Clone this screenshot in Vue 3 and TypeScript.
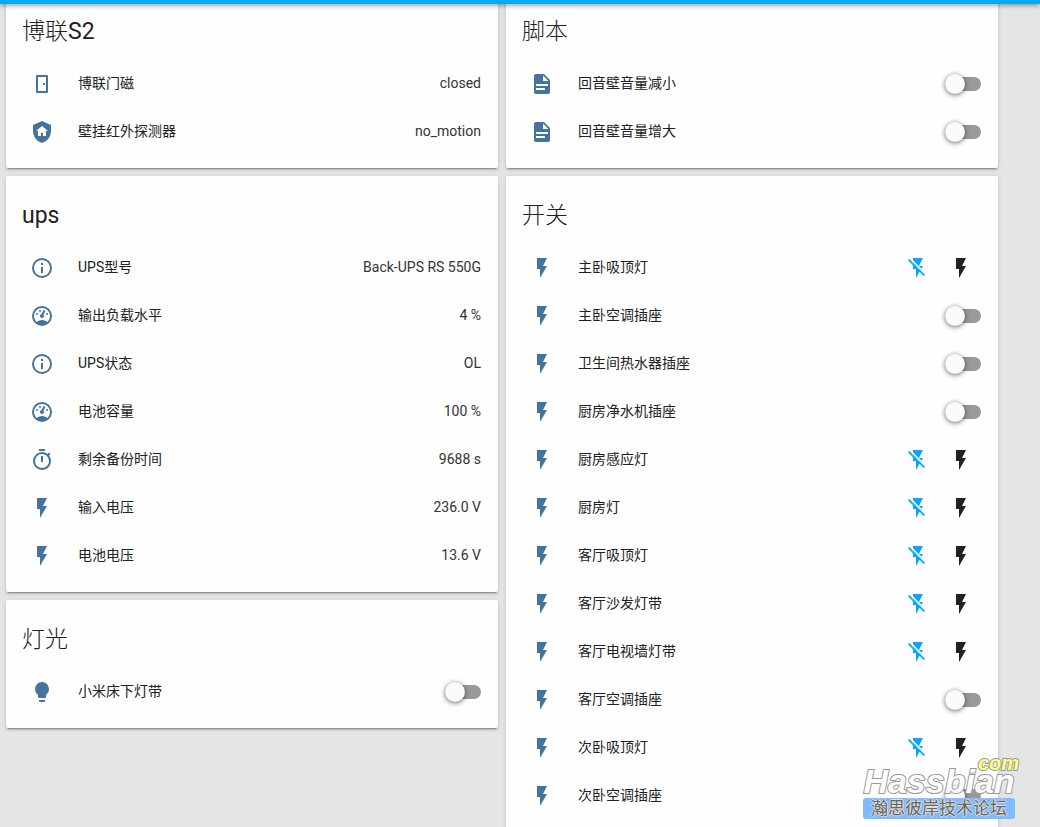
<script setup lang="ts">
import { reactive } from 'vue'

type IconName = 'door' | 'shield' | 'file' | 'info' | 'gauge' | 'timer' | 'flash' | 'bulb'

interface Entity {
  id: string
  icon: IconName
  name: string
  kind: 'sensor' | 'toggle' | 'pair'
  state?: string
  on?: boolean
}

interface Card {
  title: string
  entities: Entity[]
}

const flash = 'M7,2V13H10V22L17,10H13L17,2H7Z'
const flashOff =
  'M17,10H13L17,2H7V4.18L15.46,12.64M3.27,3L2,4.27L7,9.27V13H10V22L13.58,15.86L17.73,20L19,18.73L3.27,3Z'

const icons: Record<IconName, string> = {
  door: 'M7,3H17A1,1 0 0,1 18,4V20A1,1 0 0,1 17,21H7A1,1 0 0,1 6,20V4A1,1 0 0,1 7,3M8,5V19H16V5H8M13,11H15V13H13V11Z',
  shield:
    'M11,13H13V16H16V11H18L12,6L6,11H8V16H11V13M12,1L21,5V11C21,16.55 17.16,21.74 12,23C6.84,21.74 3,16.55 3,11V5L12,1Z',
  file: 'M13,9H18.5L13,3.5V9M6,2H14L20,8V20A2,2 0 0,1 18,22H6C4.89,22 4,21.1 4,20V4C4,2.89 4.89,2 6,2M15,18V16H6V18H15M18,14V12H6V14H18Z',
  info: 'M11,9H13V7H11M12,20C7.59,20 4,16.41 4,12C4,7.59 7.59,4 12,4C16.41,4 20,7.59 20,12C20,16.41 16.41,20 12,20M12,2A10,10 0 0,0 2,12A10,10 0 0,0 12,22A10,10 0 0,0 22,12A10,10 0 0,0 12,2M11,17H13V11H11V17Z',
  gauge:
    'M17.3,18C19,16.5 20,14.4 20,12A8,8 0 0,0 12,4A8,8 0 0,0 4,12C4,14.4 5,16.5 6.7,18C8.2,16.7 10,16 12,16C14,16 15.9,16.7 17.3,18M12,2A10,10 0 0,1 22,12A10,10 0 0,1 12,22A10,10 0 0,1 2,12A10,10 0 0,1 12,2M7,9A1,1 0 0,1 8,10A1,1 0 0,1 7,11A1,1 0 0,1 6,10A1,1 0 0,1 7,9M10,6A1,1 0 0,1 11,7A1,1 0 0,1 10,8A1,1 0 0,1 9,7A1,1 0 0,1 10,6M17,9A1,1 0 0,1 18,10A1,1 0 0,1 17,11A1,1 0 0,1 16,10A1,1 0 0,1 17,9M14.4,6.1C14.9,6.3 15.1,6.9 15,7.4L13.6,10.8C13.8,11.1 14,11.5 14,12A2,2 0 0,1 12,14A2,2 0 0,1 10,12C10,11 10.7,10.2 11.7,10L13.1,6.7C13.3,6.1 13.9,5.9 14.4,6.1Z',
  timer:
    'M12,20A7,7 0 0,1 5,13A7,7 0 0,1 12,6A7,7 0 0,1 19,13A7,7 0 0,1 12,20M19.03,7.39L20.45,5.97C20,5.46 19.55,5 19.04,4.56L17.62,6C16.07,4.74 14.12,4 12,4A9,9 0 0,0 3,13A9,9 0 0,0 12,22C17,22 21,17.97 21,13C21,10.88 20.26,8.93 19.03,7.39M11,14H13V8H11M15,1H9V3H15V1Z',
  flash,
  bulb: 'M12,2A7,7 0 0,0 5,9C5,11.38 6.19,13.47 8,14.74V17A1,1 0 0,0 9,18H15A1,1 0 0,0 16,17V14.74C17.81,13.47 19,11.38 19,9A7,7 0 0,0 12,2M9,21A1,1 0 0,0 10,22H14A1,1 0 0,0 15,21V20H9V21Z',
}

const sensor = (id: string, icon: IconName, name: string, state: string): Entity => ({
  id,
  icon,
  name,
  kind: 'sensor',
  state,
})
const toggle = (id: string, icon: IconName, name: string): Entity => ({ id, icon, name, kind: 'toggle', on: false })
const pair = (id: string, name: string): Entity => ({ id, icon: 'flash', name, kind: 'pair', on: false })

// Splits a title into Latin and Han runs, so that Han runs can take the light weight.
const runs = (title: string): string[] => title.match(/[\x20-\x7e]+|[^\x20-\x7e]+/g) ?? []
const isHan = (run: string): boolean => run.charCodeAt(0) > 0x7e

const columns = reactive<Card[][]>([
  [
    {
      title: '博联S2',
      entities: [
        sensor('s2-door', 'door', '博联门磁', 'closed'),
        sensor('s2-motion', 'shield', '壁挂红外探测器', 'no_motion'),
      ],
    },
    {
      title: 'ups',
      entities: [
        sensor('ups-model', 'info', 'UPS型号', 'Back-UPS RS 550G'),
        sensor('ups-load', 'gauge', '输出负载水平', '4 %'),
        sensor('ups-status', 'info', 'UPS状态', 'OL'),
        sensor('ups-battery', 'gauge', '电池容量', '100 %'),
        sensor('ups-time', 'timer', '剩余备份时间', '9688 s'),
        sensor('ups-input', 'flash', '输入电压', '236.0 V'),
        sensor('ups-voltage', 'flash', '电池电压', '13.6 V'),
      ],
    },
    { title: '灯光', entities: [toggle('light-bed', 'bulb', '小米床下灯带')] },
  ],
  [
    {
      title: '脚本',
      entities: [
        toggle('script-down', 'file', '回音壁音量减小'),
        toggle('script-up', 'file', '回音壁音量增大'),
      ],
    },
    {
      title: '开关',
      entities: [
        pair('sw-1', '主卧吸顶灯'),
        toggle('sw-2', 'flash', '主卧空调插座'),
        toggle('sw-3', 'flash', '卫生间热水器插座'),
        toggle('sw-4', 'flash', '厨房净水机插座'),
        pair('sw-5', '厨房感应灯'),
        pair('sw-6', '厨房灯'),
        pair('sw-7', '客厅吸顶灯'),
        pair('sw-8', '客厅沙发灯带'),
        pair('sw-9', '客厅电视墙灯带'),
        toggle('sw-10', 'flash', '客厅空调插座'),
        pair('sw-11', '次卧吸顶灯'),
        toggle('sw-12', 'flash', '次卧空调插座'),
      ],
    },
  ],
])
</script>

<template>
  <div class="page">
    <header class="toolbar"></header>
    <main class="columns">
      <div v-for="(cards, c) in columns" :key="c" class="column">
        <section v-for="card in cards" :key="card.title" class="card">
          <h2 class="title">
            <span v-for="run in runs(card.title)" :key="run" :class="{ han: isHan(run) }">{{ run }}</span>
          </h2>
          <ul class="rows">
            <li v-for="e in card.entities" :key="e.id" class="row">
              <span class="badge">
                <svg class="icon" viewBox="0 0 24 24" aria-hidden="true">
                  <path :d="icons[e.icon]" fill-rule="evenodd" />
                </svg>
              </span>
              <label v-if="e.kind === 'toggle'" class="name" :for="e.id">{{ e.name }}</label>
              <span v-else class="name">{{ e.name }}</span>

              <span v-if="e.kind === 'sensor'" class="state">{{ e.state }}</span>
              <input
                v-else-if="e.kind === 'toggle'"
                :id="e.id"
                v-model="e.on"
                class="switch"
                type="checkbox"
                role="switch"
              />
              <span v-else class="pair">
                <button
                  type="button"
                  class="flash-button"
                  :class="{ active: !e.on }"
                  :aria-label="e.name + ' 关'"
                  @click="e.on = false"
                >
                  <svg class="icon" viewBox="0 0 24 24" aria-hidden="true"><path :d="flashOff" /></svg>
                </button>
                <button
                  type="button"
                  class="flash-button"
                  :class="{ active: e.on }"
                  :aria-label="e.name + ' 开'"
                  @click="e.on = true"
                >
                  <svg class="icon" viewBox="0 0 24 24" aria-hidden="true"><path :d="flash" /></svg>
                </button>
              </span>
            </li>
          </ul>
        </section>
      </div>
    </main>

    <aside class="watermark">
      <span class="brand">Hassbian</span>
      <span class="tld">com</span>
      <span class="forum">瀚思彼岸技术论坛</span>
    </aside>
  </div>
</template>

<style>
body {
  margin: 0;
  background: #e5e5e5;
}
</style>

<style scoped>
.page {
  position: relative;
  height: 100vh;
  overflow: hidden;
  background: #e5e5e5;
  color: #212121;
  font-family: Roboto, 'Noto Sans CJK SC', sans-serif;
  font-size: 14px;
  line-height: 20px;
}

.toolbar {
  position: relative;
  z-index: 1;
  height: 4px;
  background: #03a9f4;
  box-shadow: 0 1px 5px rgba(0, 0, 0, 0.5);
}

/* The first cards are scrolled partly under the toolbar. */
.columns {
  display: grid;
  grid-template-columns: 1fr 1fr;
  gap: 8px;
  align-items: start;
  margin-top: -12px;
  padding: 0 42px 0 6px;
}

.column {
  display: flex;
  flex-direction: column;
  gap: 8px;
  min-width: 0;
}

.card {
  padding: 20px 17px 16px 16px;
  border-radius: 2px;
  background: #fefefe;
  box-shadow:
    0 2px 2px 0 rgba(0, 0, 0, 0.14),
    0 1px 5px 0 rgba(0, 0, 0, 0.12),
    0 3px 1px -2px rgba(0, 0, 0, 0.2);
}

.title {
  margin: 0 0 12px;
  font-size: 23px;
  font-weight: 400;
  line-height: 40px;
}

.han {
  font-family: 'Noto Sans CJK SC Light', 'Noto Sans CJK SC', sans-serif;
  font-weight: 300;
  line-height: 23px;
}

.rows {
  display: flex;
  flex-direction: column;
  gap: 8px;
  margin: 0;
  padding: 0;
  list-style: none;
}

.row {
  display: flex;
  align-items: center;
  height: 40px;
}

.badge {
  display: flex;
  justify-content: center;
  width: 40px;
  margin-right: 16px;
  color: #44739e;
}

.icon {
  display: block;
  width: 24px;
  height: 24px;
  fill: currentColor;
}

.name,
.state {
  padding-bottom: 2px;
}

.name {
  flex: 1;
  min-width: 0;
}

.state {
  color: #333;
  white-space: nowrap;
}

.pair {
  display: flex;
  gap: 3px;
}

.flash-button {
  display: flex;
  align-items: center;
  justify-content: center;
  width: 40px;
  height: 40px;
  padding: 0;
  border: 0;
  background: none;
  color: #212121;
  cursor: pointer;
}

.flash-button.active {
  color: #03a9f4;
}

.switch {
  position: relative;
  width: 36px;
  height: 14px;
  margin: 0;
  border-radius: 7px;
  background: #999;
  appearance: none;
  cursor: pointer;
}

.switch::before {
  content: '';
  position: absolute;
  top: -3px;
  left: 0;
  width: 20px;
  height: 20px;
  border-radius: 50%;
  background: #fafafa;
  box-shadow: 0 1px 5px rgba(0, 0, 0, 0.6);
}

.switch:checked {
  background: #81d4fa;
}

.switch:checked::before {
  left: 16px;
  background: #03a9f4;
}

.watermark {
  position: absolute;
  right: 25px;
  bottom: 8px;
  z-index: 2;
  display: flex;
  flex-direction: column;
  width: 152px;
  font-family: 'Liberation Sans', 'Noto Sans CJK SC', sans-serif;
  pointer-events: none;
}

.brand,
.tld {
  font-style: italic;
  font-weight: 700;
  paint-order: stroke;
  -webkit-text-stroke: 2px #999;
}

.brand {
  color: #fdfdfd;
  font-size: 34px;
  line-height: 34px;
  text-align: center;
}

.tld {
  position: absolute;
  top: -12px;
  right: -4px;
  color: #ffff80;
  font-size: 20px;
  line-height: 22px;
}

.forum {
  border-radius: 3px;
  background: #80baff;
  color: #666;
  font-size: 17px;
  line-height: 21px;
  text-align: center;
  text-shadow:
    1px 0 #ddd,
    -1px 0 #ddd,
    0 1px #ddd,
    0 -1px #ddd;
}
</style>
